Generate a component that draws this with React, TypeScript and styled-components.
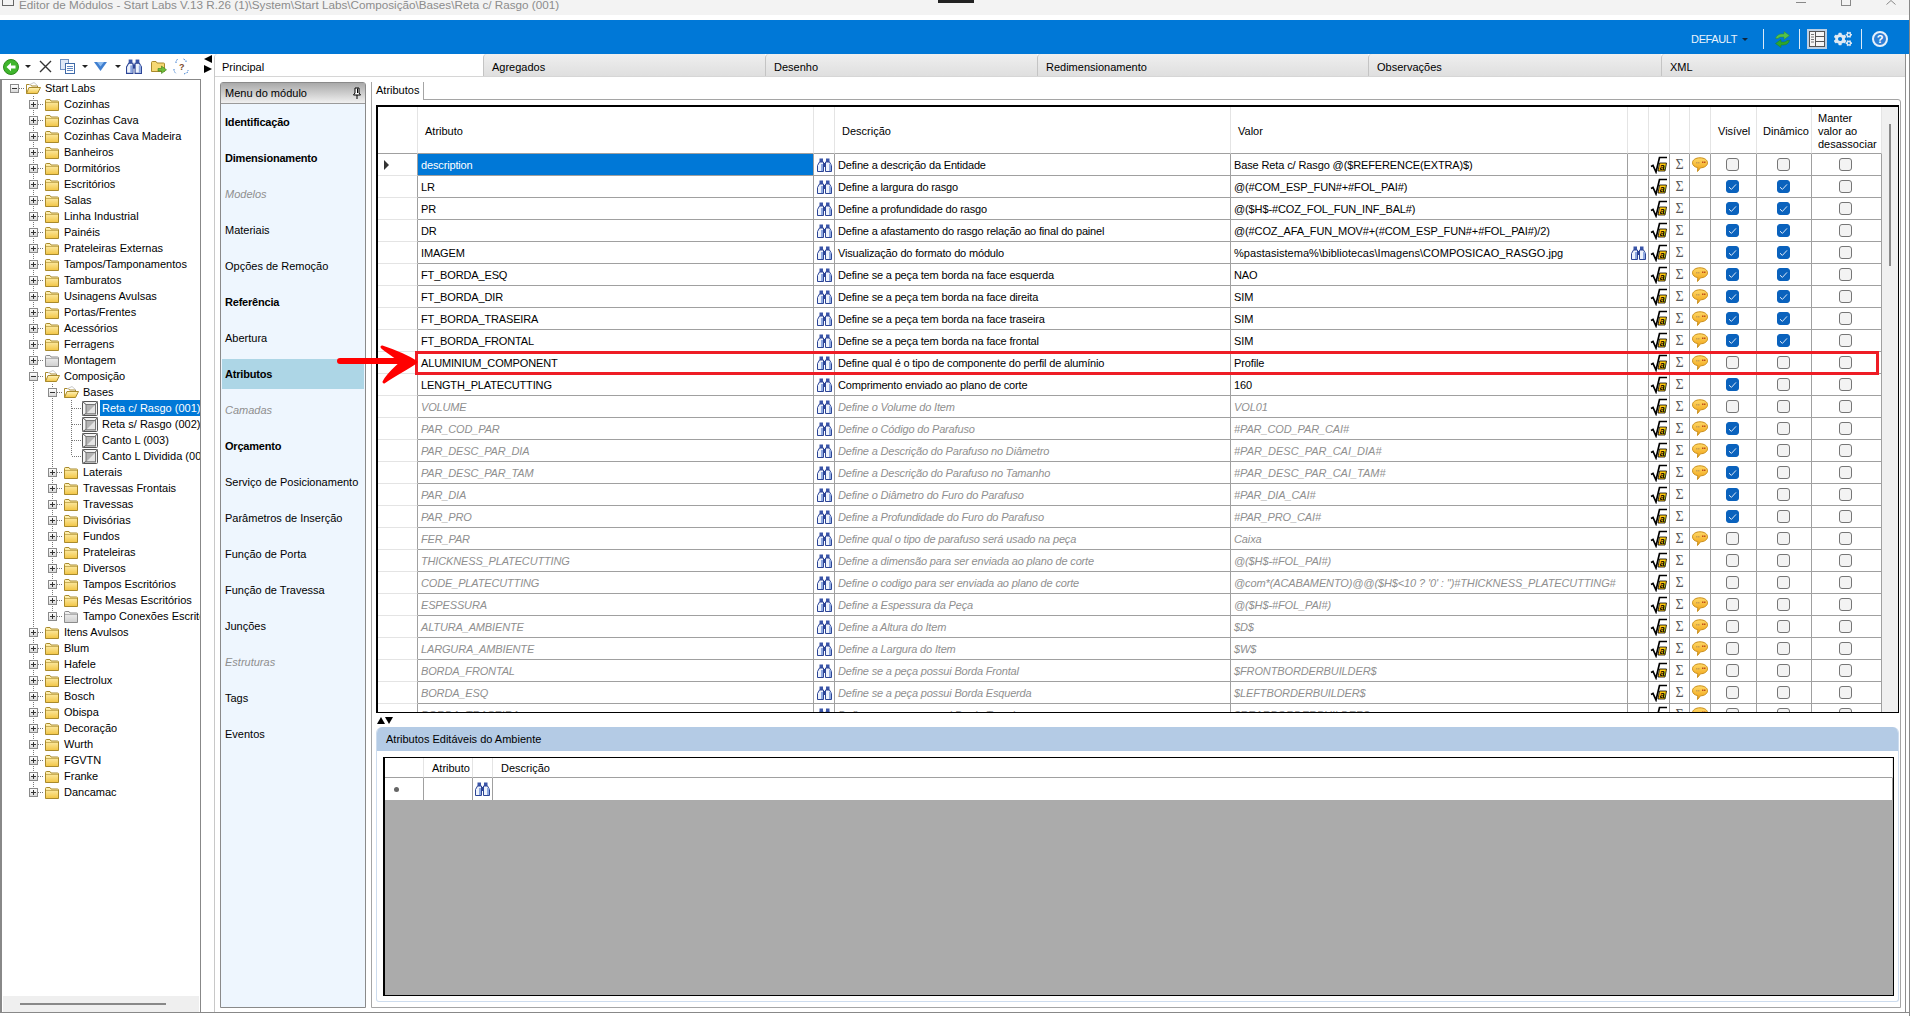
import React from 'react'
import styled, { createGlobalStyle } from 'styled-components'
import { FaCogs } from 'react-icons/fa'

const GlobalStyle = createGlobalStyle`
  html, body { margin: 0; padding: 0; background: #fff; overflow: hidden; }
  *, *::before, *::after { box-sizing: border-box; }
  body { font-family: "Liberation Sans", Arial, sans-serif; font-size: 11px; color: #000; }
`

const GRID_COLUMNS = '40px 396px 21px 396px 397px 21px 21px 20px 21px 46px 55px 70px'
const DOT_V = 'repeating-linear-gradient(to bottom, #777 0 1px, transparent 1px 2px)'
const DOT_H = 'repeating-linear-gradient(to right, #777 0 1px, transparent 1px 2px)'

const Page = styled.div`
  position: relative;
  width: 1910px;
  height: 1016px;
  display: flex;
  flex-direction: column;
  overflow: hidden;
  background: #fff;
  border-right: 1px solid #888;
`

const TitleBar = styled.div`
  height: 20px;
  flex: none;
  display: flex;
  align-items: flex-start;
  background: #f3f3f3;
  border-bottom: 5px solid #fff;
  overflow: hidden;
  padding-left: 2px;
`

const TitleIcon = styled.div`
  width: 12px;
  height: 6px;
  border: 1px solid #666;
  border-top: none;
  margin-right: 5px;
  flex: none;
`

const TitleText = styled.div`
  font-size: 11.7px;
  line-height: 9px;
  color: #8c8c8c;
  white-space: nowrap;
  width: 919px;
`

const TitleNotch = styled.div`
  width: 36px;
  height: 3px;
  background: #222;
  flex: none;
`

const WindowControls = styled.div`
  margin-left: auto;
  display: flex;
  align-items: flex-start;
  padding-right: 13px;
  gap: 35px;
`

const MinimizeGlyph = styled.div`
  width: 10px;
  height: 3px;
  border-bottom: 1px solid #888;
`

const RestoreGlyph = styled.div`
  width: 10px;
  height: 6px;
  border: 1px solid #888;
  border-top: none;
`

const Ribbon = styled.div`
  height: 34px;
  flex: none;
  display: flex;
  align-items: center;
  justify-content: flex-end;
  background: #0078d7;
  padding: 4px 21px 0 0;
`

const ProfileName = styled.span`
  color: #eaf3fc;
  font-size: 11px;
  letter-spacing: -0.4px;
  margin-right: 5px;
`

const ProfileCaret = styled.span`
  width: 0;
  height: 0;
  border-left: 3px solid transparent;
  border-right: 3px solid transparent;
  border-top: 3px solid #10253c;
  margin-right: 15px;
`

const RibbonSep = styled.span<{ $after: number }>`
  width: 1px;
  height: 20px;
  background: #dbe9f7;
  margin-right: ${p => p.$after}px;
`

const RibbonSlot = styled.span<{ $after: number; $active?: boolean }>`
  display: flex;
  align-items: center;
  justify-content: center;
  margin-right: ${p => p.$after}px;
  padding: ${p => (p.$active ? '2px' : '0')};
  background: ${p => (p.$active ? '#bcd0e4' : 'transparent')};
`

const HelpBadge = styled.span`
  width: 16px;
  height: 16px;
  border-radius: 50%;
  border: 2px solid #e6f0fa;
  background: #2f7fd6;
  color: #fff;
  font-size: 11px;
  font-weight: bold;
  line-height: 12px;
  text-align: center;
`

const MainRow = styled.div`
  flex: 1;
  display: flex;
  min-height: 0;
  margin-bottom: 3px;
  border-bottom: 1px solid #888;
`

const LeftPane = styled.div`
  width: 201px;
  flex: none;
  display: flex;
  flex-direction: column;
`

const Toolbar = styled.div`
  height: 25px;
  flex: none;
  display: flex;
  align-items: center;
  padding-left: 3px;
`

const ToolSlot = styled.span<{ $gap?: number }>`
  display: flex;
  margin-left: ${p => p.$gap ?? 0}px;
`

const ToolCaret = styled.span<{ $gap: number }>`
  width: 0;
  height: 0;
  border-left: 3px solid transparent;
  border-right: 3px solid transparent;
  border-top: 3px solid #222;
  margin-left: ${p => p.$gap}px;
`

const TreeBox = styled.div`
  flex: 1;
  display: flex;
  flex-direction: column;
  min-height: 0;
  border-top: 1px solid #888;
  border-left: 2px solid #888;
  border-right: 1px solid #888;
`

const TreeBody = styled.div`
  flex: 1;
  overflow: hidden;
`

const TreeRowLine = styled.div`
  height: 16px;
  display: flex;
  align-items: center;
  margin-left: -2px;
  padding-left: 5px;
  white-space: nowrap;
`

const TreeGuide = styled.span<{ $line: boolean }>`
  width: 19px;
  height: 16px;
  flex: none;
  background: ${p => (p.$line ? `${DOT_V} 9px 0 / 1px 100% no-repeat` : 'none')};
`

const TreeJoint = styled.span<{ $span: 'full' | 'half' | 'none' }>`
  width: 19px;
  height: 16px;
  flex: none;
  display: flex;
  align-items: center;
  justify-content: center;
  background:
    ${DOT_H} 10px 8px / 9px 1px no-repeat,
    ${p =>
      p.$span === 'full'
        ? `${DOT_V} 9px 0 / 1px 100% no-repeat`
        : p.$span === 'half'
          ? `${DOT_V} 9px 0 / 1px 8px no-repeat`
          : 'none'};
`

const ExpandBox = styled.span<{ $open: boolean }>`
  width: 9px;
  height: 9px;
  border: 1px solid #8a8a8a;
  background:
    linear-gradient(#333, #333) center / 5px 1px no-repeat,
    ${p => (p.$open ? 'none' : 'linear-gradient(#333, #333) center / 1px 5px no-repeat')},
    linear-gradient(#fff, #d8d8d8);
`

const TreeIconSlot = styled.span`
  display: flex;
  margin-left: 1px;
  flex: none;
`

const TreeLabel = styled.span<{ $selected?: boolean }>`
  margin-left: 2px;
  padding: 0 2px;
  line-height: 16px;
  height: 16px;
  color: ${p => (p.$selected ? '#fff' : '#000')};
  background: ${p => (p.$selected ? '#0078d7' : 'transparent')};
`

const TreeScroll = styled.div`
  height: 16px;
  flex: none;
  margin: 0 1px;
  background: #efefef;
  display: flex;
  align-items: center;
  padding-left: 17px;
`

const TreeScrollThumb = styled.div`
  width: 146px;
  height: 2px;
  background: #888;
`

const PaneSplitter = styled.div`
  width: 13px;
  flex: none;
  display: flex;
  flex-direction: column;
  align-items: center;
  gap: 2px;
  padding-top: 1px;
`

const Triangle = styled.span<{ $dir: 'left' | 'right' | 'up' | 'down' }>`
  width: 0;
  height: 0;
  ${p =>
    p.$dir === 'left'
      ? 'border-top: 4px solid transparent; border-bottom: 4px solid transparent; border-right: 8px solid #000;'
      : p.$dir === 'right'
        ? 'border-top: 4px solid transparent; border-bottom: 4px solid transparent; border-left: 8px solid #000;'
        : p.$dir === 'up'
          ? 'border-left: 4px solid transparent; border-right: 4px solid transparent; border-bottom: 7px solid #000;'
          : 'border-left: 4px solid transparent; border-right: 4px solid transparent; border-top: 7px solid #000;'}
`

const RowPointer = styled.span`
  width: 0;
  height: 0;
  border-top: 5px solid transparent;
  border-bottom: 5px solid transparent;
  border-left: 5px solid #333;
`

const TabArea = styled.div`
  flex: 1;
  display: flex;
  flex-direction: column;
  min-width: 0;
  margin-right: 3px;
  border-left: 1px solid #c8c8c8;
  border-right: 1px solid #8f8f8f;
  border-top-left-radius: 4px;
`

const TabStrip = styled.div`
  height: 23px;
  flex: none;
  display: flex;
  border-bottom: 1px solid #d6d6d6;
`

const MainTab = styled.div<{ $w?: number; $active?: boolean }>`
  ${p => (p.$w ? `width: ${p.$w}px; flex: none;` : 'flex: 1;')}
  display: flex;
  align-items: center;
  padding: 3px 0 0 ${p => (p.$active ? 7 : 8)}px;
  background: ${p => (p.$active ? '#fff' : 'linear-gradient(#efefef, #dfdfdf)')};
  border-left: ${p => (p.$active ? 'none' : '1px solid #c4c4c4')};
  border-top-left-radius: 4px;
`

const TabBody = styled.div`
  flex: 1;
  display: flex;
  min-height: 0;
  padding: 5px 5px 4px 5px;
`

const ModuleMenu = styled.div`
  width: 146px;
  flex: none;
  display: flex;
  flex-direction: column;
  border: 1px solid #8a8a8a;
  border-top-left-radius: 3px;
  border-top-right-radius: 3px;
  background: #eef6fe;
  margin-right: 5px;
`

const ModuleMenuHeader = styled.div`
  height: 21px;
  flex: none;
  display: flex;
  align-items: center;
  justify-content: space-between;
  padding: 0 4px;
  background: linear-gradient(#a9a9a9, #f0f0f0);
  border-bottom: 1px solid #9a9a9a;
`

const MenuItem = styled.div<{ $kind: 'normal' | 'bold' | 'off'; $active?: boolean }>`
  height: 30px;
  margin: 3px 1px;
  padding-left: 3px;
  display: flex;
  align-items: center;
  white-space: nowrap;
  font-weight: ${p => (p.$kind === 'bold' ? 'bold' : 'normal')};
  letter-spacing: ${p => (p.$kind === 'bold' ? '-0.2px' : '0')};
  font-style: ${p => (p.$kind === 'off' ? 'italic' : 'normal')};
  color: ${p => (p.$kind === 'off' ? '#8f8f8f' : '#000')};
  background: ${p => (p.$active ? '#add6e6' : 'transparent')};
`

const RightColumn = styled.div`
  flex: 1;
  min-width: 0;
  display: flex;
  flex-direction: column;
`

const SubTab = styled.div`
  position: relative;
  z-index: 1;
  width: 53px;
  height: 18px;
  flex: none;
  margin-bottom: -1px;
  padding: 0 0 2px 4px;
  display: flex;
  align-items: center;
  background: #fff;
  border-left: 1px solid #a5a5a5;
  border-right: 1px solid #a5a5a5;
`

const TabPage = styled.div`
  flex: 1;
  min-height: 0;
  display: flex;
  flex-direction: column;
  padding: 5px 1px 5px 4px;
  border: 1px solid #a5a5a5;
  border-top-right-radius: 3px;
  margin-right: -1px;
`

const AttributeGrid = styled.div`
  height: 608px;
  flex: none;
  display: flex;
  overflow: hidden;
  border-top: 2px solid #000;
  border-left: 2px solid #000;
  border-right: 1px solid #000;
  border-bottom: 1px solid #000;
`

const GridTable = styled.div`
  width: 1504px;
  flex: none;
`

const GridRow = styled.div<{ $marked?: boolean }>`
  position: relative;
  display: grid;
  grid-template-columns: ${GRID_COLUMNS};
  height: 22px;
  ${p =>
    p.$marked &&
    `z-index: 2;
    &::after {
      content: '';
      position: absolute;
      left: 37px;
      top: -1px;
      width: 1464px;
      height: 24px;
      border: 3px solid #ee1c25;
      pointer-events: none;
    }`}
`

const GridHead = styled.div`
  display: grid;
  grid-template-columns: ${GRID_COLUMNS};
  height: 47px;
`

const HeadCell = styled.div<{ $pad?: number }>`
  display: flex;
  align-items: center;
  padding: 2px 0 0 ${p => p.$pad ?? 7}px;
  line-height: 13px;
  border-right: 1px solid #e4e4e4;
  border-bottom: 1px solid #a0a0a0;
`

const RowHeader = styled.div`
  display: flex;
  align-items: center;
  padding-left: 6px;
  border-right: 1px solid #a0a0a0;
  border-bottom: 1px solid #e4e4e4;
`

const Cell = styled.div<{ $off?: boolean; $selected?: boolean; $tight?: number }>`
  display: flex;
  align-items: center;
  padding-left: 3px;
  white-space: nowrap;
  overflow: hidden;
  letter-spacing: ${p => p.$tight ?? 0}px;
  border-right: 1px solid #a0a0a0;
  border-bottom: 1px solid #a0a0a0;
  color: ${p => (p.$selected ? '#fff' : p.$off ? '#8f8f8f' : '#000')};
  font-style: ${p => (p.$off ? 'italic' : 'normal')};
  background: ${p => (p.$selected ? '#0078d7' : '#fff')};
`

const IconCell = styled(Cell)`
  justify-content: center;
  padding-left: 0;
`

const CheckCell = styled(IconCell)`
  padding-right: 2px;
`

const SigmaGlyph = styled.span`
  font-family: "Liberation Serif", "DejaVu Serif", serif;
  font-size: 14px;
  color: #555;
`

const CheckMark = styled.span<{ $on: boolean }>`
  width: 13px;
  height: 13px;
  display: flex;
  align-items: center;
  justify-content: center;
  border-radius: 3px;
  border: 1px solid ${p => (p.$on ? '#0a62bd' : '#767676')};
  background: ${p => (p.$on ? '#0a62bd' : '#f3f3f3')};
`

const GridScrollbar = styled.div`
  width: 16px;
  flex: none;
  background: #f0f0f0;
  display: flex;
  justify-content: center;
  padding: 17px 0 0 0;
`

const GridScrollThumb = styled.div`
  width: 2px;
  height: 142px;
  background: #8a8a8a;
`

const GridSplitter = styled.div`
  height: 14px;
  flex: none;
  display: flex;
  align-items: center;
  padding-left: 1px;
`

const EnvPanel = styled.div`
  flex: 1;
  min-height: 0;
  display: flex;
  flex-direction: column;
  border: 1px solid #cddcee;
  border-top: none;
  border-radius: 6px 6px 3px 3px;
  overflow: hidden;
`

const EnvHeader = styled.div`
  height: 24px;
  flex: none;
  display: flex;
  align-items: center;
  padding-left: 9px;
  background: #b4cbe5;
`

const EnvBody = styled.div`
  flex: 1;
  min-height: 0;
  display: flex;
  padding: 6px 4px 5px 6px;
`

const EnvGrid = styled.div`
  flex: 1;
  display: flex;
  flex-direction: column;
  border: 1px solid #000;
  border-left-width: 2px;
  background: #ababab;
`

const EnvHeadRow = styled.div`
  display: grid;
  grid-template-columns: 39px 49px 20px 1fr;
  height: 20px;
  flex: none;
  background: #fff;
`

const EnvHeadCell = styled.div`
  display: flex;
  align-items: center;
  padding-left: 8px;
  border-right: 1px solid #e4e4e4;
  border-bottom: 1px solid #a0a0a0;
`

const EnvRow = styled.div`
  display: grid;
  grid-template-columns: 39px 49px 20px 1fr;
  height: 22px;
  flex: none;
  background: #fff;
`

const EnvCell = styled.div<{ $center?: boolean }>`
  display: flex;
  align-items: center;
  justify-content: ${p => (p.$center ? 'center' : 'flex-start')};
  border-right: 1px solid #a0a0a0;
`

const EnvRowHeader = styled(EnvCell)`
  padding-left: 9px;
`

const NewRowDot = styled.span`
  width: 5px;
  height: 5px;
  border-radius: 50%;
  background: #666;
`

const CalloutArrow = styled.svg`
  position: absolute;
  left: 336px;
  top: 342px;
  pointer-events: none;
  z-index: 3;
`

const CloseGlyph = () => (
  <svg width="10" height="5" viewBox="0 0 10 5">
    <path d="M0.5 4.5L5 0.5L9.5 4.5" fill="none" stroke="#888" />
  </svg>
)

const Binoculars = ({ size = 15 }: { size?: number }) => (
  <svg width={size} height={(size * 14) / 15} viewBox="0 0 15 14">
    <rect x="2.5" y="0.5" width="3.5" height="4" fill="#3a55a8" />
    <rect x="9" y="0.5" width="3.5" height="4" fill="#3a55a8" />
    <path d="M0.5 13.5V7.5L2.5 4H6.5V13.5Z" fill="#eef3fc" stroke="#2c4596" />
    <path d="M14.5 13.5V7.5L12.5 4H8.5V13.5Z" fill="#eef3fc" stroke="#2c4596" />
    <rect x="6.5" y="5" width="2" height="4" fill="#2c4596" />
    <rect x="4" y="6" width="2" height="7" fill="#8ea8e0" />
    <rect x="12" y="6" width="2" height="7" fill="#8ea8e0" />
  </svg>
)

const FolderIcon = ({ open, muted }: { open?: boolean; muted?: boolean }) => {
  const edge = muted ? '#8b8b8b' : '#a98a2c'
  const top = muted ? '#f4f4f4' : '#fff4bc'
  const bottom = muted ? '#cfcfcf' : '#f2c544'
  const gradId = muted ? 'folderGray' : 'folderYellow'
  const gradient = (
    <defs>
      <linearGradient id={gradId} x1="0" y1="0" x2="0" y2="1">
        <stop offset="0" stopColor={top} />
        <stop offset="1" stopColor={bottom} />
      </linearGradient>
    </defs>
  )
  if (open) {
    return (
      <svg width="16" height="14" viewBox="0 0 16 14">
        {gradient}
        <path d="M1.5 12.5V3.5h4l1 1.5h6v2" fill="#fff" stroke={edge} />
        <path d="M4 4L9 1.5L13 5" fill="none" stroke="#c9c9c9" />
        <path d="M1.5 12.5L4 6.5H15.5L12.5 12.5Z" fill={`url(#${gradId})`} stroke={edge} />
      </svg>
    )
  }
  return (
    <svg width="16" height="14" viewBox="0 0 16 14">
      {gradient}
      <path d="M1.5 3.5C1.5 2.5 2 2.5 3 2.5H6L7 4H13.5C14.5 4 14.5 4.5 14.5 5V13.5H1.5Z" fill={`url(#${gradId})`} stroke={edge} />
      <path d="M2 5.5H14" stroke={edge} strokeWidth="0.6" />
    </svg>
  )
}

const ModuleCube = () => (
  <svg width="16" height="16" viewBox="0 0 16 16">
    <rect x="0.5" y="1.5" width="15" height="14" rx="1" fill="#f4f4f4" stroke="#555" />
    <path d="M0.5 1.5L4 4.5M15.5 1.5L13 4.5M0.5 15.5L4 13.5" stroke="#555" />
    <rect x="4" y="4.5" width="9.5" height="9.5" fill="#b4b4b4" stroke="#777" />
    <path d="M5 13L13 5V13Z" fill="#e4e4e4" />
  </svg>
)

const RootAIcon = () => (
  <svg width="18" height="18" viewBox="0 0 18 18">
    <path d="M1 10.5L3 9.5L6 16L9.5 1.5H17" fill="none" stroke="#000" strokeWidth="1.7" />
    <path d="M9.5 7H16.5L15 15H8Z" fill="#ffc90e" stroke="#000" strokeWidth="0.8" />
    <text x="9.8" y="13.6" fontFamily="Liberation Sans, sans-serif" fontSize="9" fontWeight="bold" fontStyle="italic" fill="#000">a</text>
  </svg>
)

const Balloon = () => (
  <svg width="16" height="16" viewBox="0 0 16 16">
    <defs>
      <linearGradient id="balloonFill" x1="0" y1="0" x2="0" y2="1">
        <stop offset="0" stopColor="#ffd968" />
        <stop offset="1" stopColor="#f0a010" />
      </linearGradient>
    </defs>
    <path d="M8 0.8C12.2 0.8 15.5 2.8 15.5 5.8S12.2 10.8 8.5 10.8L5.5 14.5L5.8 10.6C2.8 10.2 0.5 8.4 0.5 5.8C0.5 2.8 3.8 0.8 8 0.8Z" fill="url(#balloonFill)" stroke="#c98f1d" />
    <rect x="4" y="5" width="1.5" height="1.5" fill="#c9a050" />
    <rect x="6" y="5" width="1.5" height="1.5" fill="#c9a050" />
    <rect x="10" y="4.5" width="1.5" height="1.5" fill="#c0501a" />
    <rect x="12" y="4.5" width="1.5" height="1.5" fill="#c0501a" />
  </svg>
)

const TickIcon = () => (
  <svg width="9" height="8" viewBox="0 0 9 8">
    <path d="M1 4.2L3.4 6.4L8 1.4" fill="none" stroke="#dfeaf8" strokeWidth="1" />
  </svg>
)

const BackIcon = () => (
  <svg width="16" height="16" viewBox="0 0 16 16">
    <circle cx="8" cy="8" r="7.5" fill="#3fb52c" stroke="#2c8a1c" />
    <path d="M3.5 8L8 3.8V6.4H12.5V9.6H8V12.2Z" fill="#fff" />
  </svg>
)

const CrossIcon = () => (
  <svg width="13" height="13" viewBox="0 0 13 13">
    <path d="M1 1L12 12M12 1L1 12" stroke="#333" strokeWidth="1.4" />
  </svg>
)

const CopyIcon = () => (
  <svg width="15" height="15" viewBox="0 0 15 15">
    <rect x="0.5" y="0.5" width="8" height="10" fill="#dfe8f6" stroke="#6f8fbf" />
    <rect x="5.5" y="4.5" width="9" height="10" fill="#fff" stroke="#3f6aa8" />
    <path d="M7 7.5h6M7 9.5h6M7 11.5h6" stroke="#5f86c0" />
  </svg>
)

const DownIcon = () => (
  <svg width="13" height="11" viewBox="0 0 13 11">
    <path d="M0 1H13L6.5 10Z" fill="#3f7fd0" />
    <path d="M3 1H10L6.5 5.5Z" fill="#8fbdf0" />
  </svg>
)

const FolderArrowIcon = () => (
  <svg width="16" height="16" viewBox="0 0 16 16">
    <path d="M0.5 3.5C0.5 2.5 1 2.5 2 2.5H5L6 4H12.5C13.5 4 13.5 4.5 13.5 5V12.5H0.5Z" fill="#f6d873" stroke="#a98a2c" />
    <path d="M7 9.5H10.5V7L15.5 10.8L10.5 14.5V12H7Z" fill="#6fbe3a" stroke="#3f7f1c" strokeWidth="0.6" />
  </svg>
)

const SelectionHelpIcon = () => (
  <svg width="16" height="17" viewBox="0 0 16 17">
    <path d="M3 5V2.5L5.5 1M10.5 1L13 2.5V4M1 11V13.5L3.5 15.5M11 16L15 14V12" fill="none" stroke="#3f7fd0" strokeDasharray="1.6 1.2" />
    <text x="6" y="12" fontFamily="Liberation Sans, sans-serif" fontSize="9" fontWeight="bold" fill="#7a4a2a">?</text>
  </svg>
)

const RefreshIcon = () => (
  <svg width="17" height="17" viewBox="0 0 17 17">
    <path d="M1.5 7.5C2.3 4.5 4.8 3 7.5 3H10V0.5L15.5 4.5L10 8.5V6H7.5C5.8 6 4.8 6.6 4 7.5Z" fill="#55c24a" stroke="#2f8f2a" strokeWidth="0.5" />
    <path d="M15.5 9.5C14.7 12.5 12.2 14 9.5 14H7V16.5L1.5 12.5L7 8.5V11H9.5C11.2 11 12.2 10.4 13 9.5Z" fill="#2ea52e" stroke="#1f7f22" strokeWidth="0.5" />
  </svg>
)

const LayoutIcon = () => (
  <svg width="16" height="16" viewBox="0 0 16 16">
    <rect x="0.5" y="0.5" width="15" height="15" fill="#f5f5f5" stroke="#555" />
    <path d="M6.5 1V15M7 5.5H15M7 10.5H15" stroke="#555" />
    <path d="M2 3.5H5M2 6H5M2 8.5H5M2 11H5" stroke="#777" />
  </svg>
)

const PinIcon = () => (
  <svg width="8" height="12" viewBox="0 0 8 12">
    <path d="M2 1H6V6L7.5 8H0.5L2 6Z" fill="#fff" stroke="#000" />
    <path d="M4 8V12" stroke="#000" />
    <path d="M4.5 1.5V6" stroke="#000" />
  </svg>
)

type TreeKind = 'closed' | 'open' | 'leaf'
type TreeItem = { label: string; level: number; kind?: TreeKind; muted?: boolean; last?: boolean; selected?: boolean }

const treeItems: TreeItem[] = [
  { label: 'Start Labs', level: 0, kind: 'open' },
  { label: 'Cozinhas', level: 1 },
  { label: 'Cozinhas Cava', level: 1 },
  { label: 'Cozinhas Cava Madeira', level: 1 },
  { label: 'Banheiros', level: 1 },
  { label: 'Dormitórios', level: 1 },
  { label: 'Escritórios', level: 1 },
  { label: 'Salas', level: 1 },
  { label: 'Linha Industrial', level: 1 },
  { label: 'Painéis', level: 1 },
  { label: 'Prateleiras Externas', level: 1 },
  { label: 'Tampos/Tamponamentos', level: 1 },
  { label: 'Tamburatos', level: 1 },
  { label: 'Usinagens Avulsas', level: 1 },
  { label: 'Portas/Frentes', level: 1 },
  { label: 'Acessórios', level: 1 },
  { label: 'Ferragens', level: 1 },
  { label: 'Montagem', level: 1, muted: true },
  { label: 'Composição', level: 1, kind: 'open' },
  { label: 'Bases', level: 2, kind: 'open' },
  { label: 'Reta c/ Rasgo (001)', level: 3, kind: 'leaf', selected: true },
  { label: 'Reta s/ Rasgo (002)', level: 3, kind: 'leaf' },
  { label: 'Canto L (003)', level: 3, kind: 'leaf' },
  { label: 'Canto L Dividida (004)', level: 3, kind: 'leaf', last: true },
  { label: 'Laterais', level: 2 },
  { label: 'Travessas Frontais', level: 2 },
  { label: 'Travessas', level: 2 },
  { label: 'Divisórias', level: 2 },
  { label: 'Fundos', level: 2 },
  { label: 'Prateleiras', level: 2 },
  { label: 'Diversos', level: 2 },
  { label: 'Tampos Escritórios', level: 2 },
  { label: 'Pés Mesas Escritórios', level: 2 },
  { label: 'Tampo Conexões Escritório', level: 2, muted: true, last: true },
  { label: 'Itens Avulsos', level: 1 },
  { label: 'Blum', level: 1 },
  { label: 'Hafele', level: 1 },
  { label: 'Electrolux', level: 1 },
  { label: 'Bosch', level: 1 },
  { label: 'Obispa', level: 1 },
  { label: 'Decoração', level: 1 },
  { label: 'Wurth', level: 1 },
  { label: 'FGVTN', level: 1 },
  { label: 'Franke', level: 1 },
  { label: 'Dancamac', level: 1, last: true },
]

const mainTabs = [
  { label: 'Principal', width: 268 },
  { label: 'Agregados', width: 282 },
  { label: 'Desenho', width: 272 },
  { label: 'Redimensionamento', width: 331 },
  { label: 'Observações', width: 293 },
  { label: 'XML' },
]

const menuItems: { label: string; kind: 'normal' | 'bold' | 'off' }[] = [
  { label: 'Identificação', kind: 'bold' },
  { label: 'Dimensionamento', kind: 'bold' },
  { label: 'Modelos', kind: 'off' },
  { label: 'Materiais', kind: 'normal' },
  { label: 'Opções de Remoção', kind: 'normal' },
  { label: 'Referência', kind: 'bold' },
  { label: 'Abertura', kind: 'normal' },
  { label: 'Atributos', kind: 'bold' },
  { label: 'Camadas', kind: 'off' },
  { label: 'Orçamento', kind: 'bold' },
  { label: 'Serviço de Posicionamento', kind: 'normal' },
  { label: 'Parâmetros de Inserção', kind: 'normal' },
  { label: 'Função de Porta', kind: 'normal' },
  { label: 'Função de Travessa', kind: 'normal' },
  { label: 'Junções', kind: 'normal' },
  { label: 'Estruturas', kind: 'off' },
  { label: 'Tags', kind: 'normal' },
  { label: 'Eventos', kind: 'normal' },
]

// name, description, value, balloon, visible, dynamic
type AttributeRow = [string, string, string, boolean, boolean, boolean]

const activeRows: AttributeRow[] = [
  ['description', 'Define a descrição da Entidade', 'Base Reta c/ Rasgo @($REFERENCE(EXTRA)$)', true, false, false],
  ['LR', 'Define a largura do rasgo', '@(#COM_ESP_FUN#+#FOL_PAI#)', false, true, true],
  ['PR', 'Define a profundidade do rasgo', '@($H$-#COZ_FOL_FUN_INF_BAL#)', false, true, true],
  ['DR', 'Define a afastamento do rasgo relação ao final do painel', '@(#COZ_AFA_FUN_MOV#+(#COM_ESP_FUN#+#FOL_PAI#)/2)', false, true, true],
  ['IMAGEM', 'Visualização do formato do módulo', '%pastasistema%\\bibliotecas\\Imagens\\COMPOSICAO_RASGO.jpg', false, true, true],
  ['FT_BORDA_ESQ', 'Define se a peça tem borda na face esquerda', 'NAO', true, true, true],
  ['FT_BORDA_DIR', 'Define se a peça tem borda na face direita', 'SIM', true, true, true],
  ['FT_BORDA_TRASEIRA', 'Define se a peça tem borda na face traseira', 'SIM', true, true, true],
  ['FT_BORDA_FRONTAL', 'Define se a peça tem borda na face frontal', 'SIM', true, true, true],
  ['ALUMINIUM_COMPONENT', 'Define qual é o tipo de componente do perfil de alumínio', 'Profile', true, false, false],
  ['LENGTH_PLATECUTTING', 'Comprimento enviado ao plano de corte', '160', false, true, false],
]

const inheritedRows: AttributeRow[] = [
  ['VOLUME', 'Define o Volume do Item', 'VOL01', true, false, false],
  ['PAR_COD_PAR', 'Define o Código do Parafuso', '#PAR_COD_PAR_CAI#', true, true, false],
  ['PAR_DESC_PAR_DIA', 'Define a Descrição do Parafuso no Diâmetro', '#PAR_DESC_PAR_CAI_DIA#', true, true, false],
  ['PAR_DESC_PAR_TAM', 'Define a Descrição do Parafuso no Tamanho', '#PAR_DESC_PAR_CAI_TAM#', true, true, false],
  ['PAR_DIA', 'Define o Diâmetro do Furo do Parafuso', '#PAR_DIA_CAI#', false, true, false],
  ['PAR_PRO', 'Define a Profundidade do Furo do Parafuso', '#PAR_PRO_CAI#', false, true, false],
  ['FER_PAR', 'Define qual o tipo de parafuso será usado na peça', 'Caixa', true, false, false],
  ['THICKNESS_PLATECUTTING', 'Define a dimensão para ser enviada ao plano de corte', '@($H$-#FOL_PAI#)', false, false, false],
  ['CODE_PLATECUTTING', 'Define o codigo para ser enviada ao plano de corte', "@com*(ACABAMENTO)@@($H$<10 ? '0' : '')#THICKNESS_PLATECUTTING#", false, false, false],
  ['ESPESSURA', 'Define a Espessura da Peça', '@($H$-#FOL_PAI#)', true, false, false],
  ['ALTURA_AMBIENTE', 'Define a Altura do Item', '$D$', true, false, false],
  ['LARGURA_AMBIENTE', 'Define a Largura do Item', '$W$', true, false, false],
  ['BORDA_FRONTAL', 'Define se a peça possui Borda Frontal', '$FRONTBORDERBUILDER$', true, false, false],
  ['BORDA_ESQ', 'Define se a peça possui Borda Esquerda', '$LEFTBORDERBUILDER$', true, false, false],
  ['BORDA_TRASEIRA', 'Define se a peça possui Borda Traseira', '$REARBORDERBUILDER$', true, false, false],
]

// a few value strings need their own spacing to end where the reference does
const valueSpacing: Record<string, number> = {
  IMAGEM: 0.04,
  PAR_DESC_PAR_DIA: 0,
  PAR_DESC_PAR_TAM: 0,
}

const Check = ({ on }: { on: boolean }) => (
  <CheckMark $on={on}>{on && <TickIcon />}</CheckMark>
)

const TreeLine = ({ item }: { item: TreeItem }) => {
  const kind = item.kind ?? 'closed'
  const guides = Array.from({ length: item.level }, (_, i) => i > 0)
  const span = item.level === 0 ? 'none' : item.last ? 'half' : 'full'
  return (
    <TreeRowLine>
      {guides.map((line, i) => (
        <TreeGuide key={i} $line={line} />
      ))}
      <TreeJoint $span={span}>
        {kind !== 'leaf' && <ExpandBox $open={kind === 'open'} />}
      </TreeJoint>
      <TreeIconSlot>
        {kind === 'leaf' ? <ModuleCube /> : <FolderIcon open={kind === 'open'} muted={item.muted} />}
      </TreeIconSlot>
      <TreeLabel $selected={item.selected}>{item.label}</TreeLabel>
    </TreeRowLine>
  )
}

const AttributeLine = ({ row, off, index }: { row: AttributeRow; off?: boolean; index: number }) => {
  const [name, description, value, balloon, visible, dynamic] = row
  const first = index === 0 && !off
  return (
    <GridRow $marked={name === 'ALUMINIUM_COMPONENT'}>
      <RowHeader>{first && <RowPointer />}</RowHeader>
      <Cell $off={off} $selected={first} $tight={-0.15}>{name}</Cell>
      <IconCell><Binoculars /></IconCell>
      <Cell $off={off} $tight={-0.17}>{description}</Cell>
      <Cell $off={off} $tight={valueSpacing[name] ?? -0.12}>{value}</Cell>
      <IconCell>{name === 'IMAGEM' && <Binoculars />}</IconCell>
      <IconCell><RootAIcon /></IconCell>
      <IconCell><SigmaGlyph>Σ</SigmaGlyph></IconCell>
      <IconCell>{balloon && <Balloon />}</IconCell>
      <CheckCell><Check on={visible} /></CheckCell>
      <CheckCell><Check on={dynamic} /></CheckCell>
      <CheckCell><Check on={false} /></CheckCell>
    </GridRow>
  )
}

export default function App() {
  return (
    <Page>
      <GlobalStyle />
      <TitleBar>
        <TitleIcon />
        <TitleText>Editor de Módulos - Start Labs V.13 R.26 (1)\System\Start Labs\Composição\Bases\Reta c/ Rasgo (001)</TitleText>
        <TitleNotch />
        <WindowControls>
          <MinimizeGlyph />
          <RestoreGlyph />
          <CloseGlyph />
        </WindowControls>
      </TitleBar>

      <Ribbon>
        <ProfileName>DEFAULT</ProfileName>
        <ProfileCaret />
        <RibbonSep $after={10} />
        <RibbonSlot $after={8}><RefreshIcon /></RibbonSlot>
        <RibbonSep $after={7} />
        <RibbonSlot $after={7} $active><LayoutIcon /></RibbonSlot>
        <RibbonSlot $after={9}><FaCogs size={18} color="#dfe9f3" /></RibbonSlot>
        <RibbonSep $after={10} />
        <HelpBadge>?</HelpBadge>
      </Ribbon>

      <MainRow>
        <LeftPane>
          <Toolbar>
            <ToolSlot><BackIcon /></ToolSlot>
            <ToolCaret $gap={6} />
            <ToolSlot $gap={8}><CrossIcon /></ToolSlot>
            <ToolSlot $gap={8}><CopyIcon /></ToolSlot>
            <ToolCaret $gap={7} />
            <ToolSlot $gap={6}><DownIcon /></ToolSlot>
            <ToolCaret $gap={8} />
            <ToolSlot $gap={5}><Binoculars size={16} /></ToolSlot>
            <ToolSlot $gap={9}><FolderArrowIcon /></ToolSlot>
            <ToolSlot $gap={6}><SelectionHelpIcon /></ToolSlot>
          </Toolbar>
          <TreeBox>
            <TreeBody>
              {treeItems.map(item => (
                <TreeLine key={item.label + item.level} item={item} />
              ))}
            </TreeBody>
            <TreeScroll>
              <TreeScrollThumb />
            </TreeScroll>
          </TreeBox>
        </LeftPane>

        <PaneSplitter>
          <Triangle $dir="left" />
          <Triangle $dir="right" />
        </PaneSplitter>

        <TabArea>
          <TabStrip>
            {mainTabs.map((tab, i) => (
              <MainTab key={tab.label} $w={tab.width} $active={i === 0}>{tab.label}</MainTab>
            ))}
          </TabStrip>
          <TabBody>
            <ModuleMenu>
              <ModuleMenuHeader>
                <span>Menu do módulo</span>
                <PinIcon />
              </ModuleMenuHeader>
              {menuItems.map(item => (
                <MenuItem key={item.label} $kind={item.kind} $active={item.label === 'Atributos'}>
                  {item.label}
                </MenuItem>
              ))}
            </ModuleMenu>

            <RightColumn>
              <SubTab>Atributos</SubTab>
              <TabPage>
                <AttributeGrid>
                  <GridTable>
                    <GridHead>
                      <HeadCell />
                      <HeadCell>Atributo</HeadCell>
                      <HeadCell />
                      <HeadCell>Descrição</HeadCell>
                      <HeadCell>Valor</HeadCell>
                      <HeadCell />
                      <HeadCell />
                      <HeadCell />
                      <HeadCell />
                      <HeadCell>Visível</HeadCell>
                      <HeadCell $pad={6}>Dinâmico</HeadCell>
                      <HeadCell $pad={6}><span>Manter<br />valor ao<br />desassociar</span></HeadCell>
                    </GridHead>
                    {activeRows.map((row, i) => (
                      <AttributeLine key={row[0]} row={row} index={i} />
                    ))}
                    {inheritedRows.map((row, i) => (
                      <AttributeLine key={row[0]} row={row} index={i} off />
                    ))}
                  </GridTable>
                  <GridScrollbar>
                    <GridScrollThumb />
                  </GridScrollbar>
                </AttributeGrid>

                <GridSplitter>
                  <Triangle $dir="up" />
                  <Triangle $dir="down" />
                </GridSplitter>

                <EnvPanel>
                  <EnvHeader>Atributos Editáveis do Ambiente</EnvHeader>
                  <EnvBody>
                    <EnvGrid>
                      <EnvHeadRow>
                        <EnvHeadCell />
                        <EnvHeadCell>Atributo</EnvHeadCell>
                        <EnvHeadCell />
                        <EnvHeadCell>Descrição</EnvHeadCell>
                      </EnvHeadRow>
                      <EnvRow>
                        <EnvRowHeader><NewRowDot /></EnvRowHeader>
                        <EnvCell />
                        <EnvCell $center><Binoculars /></EnvCell>
                        <EnvCell />
                      </EnvRow>
                    </EnvGrid>
                  </EnvBody>
                </EnvPanel>
              </TabPage>
            </RightColumn>
          </TabBody>
        </TabArea>
      </MainRow>

      <CalloutArrow width="84" height="44" viewBox="0 0 84 44">
        <path d="M4 19H70" stroke="#f00" strokeWidth="6" strokeLinecap="round" />
        <path d="M46 5C58 9 70 14 80 20C70 27 58 33 48 40C52 32 60 26 66 20C60 15 52 10 46 5Z" fill="#f00" stroke="#f00" strokeWidth="3" strokeLinejoin="round" />
      </CalloutArrow>
    </Page>
  )
}
